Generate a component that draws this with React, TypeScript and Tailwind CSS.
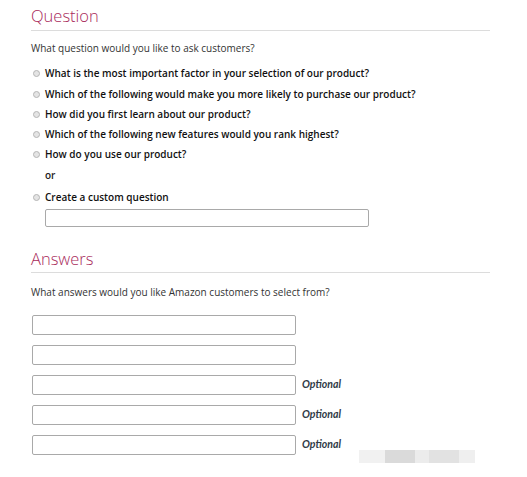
export default function App() {
  const options = [
    'What is the most important factor in your selection of our product?',
    'Which of the following would make you more likely to purchase our product?',
    'How did you first learn about our product?',
    'Which of the following new features would you rank highest?',
    'How do you use our product?',
  ];

  return (
    <div className="min-h-screen w-[527px] bg-white pl-[31px] pr-[37px] pt-[6px] font-['Open_Sans',sans-serif] text-[#222]">
      {/* Question */}
      <h2 className="border-b border-[#dcdcdc] pb-[4px] text-[16.5px] font-light leading-[20px] text-[#a8295a]">
        Question
      </h2>
      <p className="mt-[10px] text-[10px] leading-[14px] text-[#333]">
        What question would you like to ask customers?
      </p>

      <div className="mt-[8px] flex flex-col">
        {options.map((o, i) => (
          <label key={o} className={`flex h-[20px] items-center ${i === 1 ? 'mt-[1px]' : ''}`}>
            <span className="ml-[2px] mr-[5px] h-[7px] w-[7px] rounded-full border border-[#b5b5b5] bg-[#e4e4e4]" />
            <span className="text-[10px] font-semibold text-[#111]">{o}</span>
          </label>
        ))}
      </div>
      <div className="mt-[1px] flex h-[20px] items-center pl-[14px] text-[10px] font-semibold text-[#222]">
        or
      </div>
      <label className="mt-[2px] flex h-[20px] items-center">
        <span className="ml-[2px] mr-[5px] h-[7px] w-[7px] rounded-full border border-[#b5b5b5] bg-[#e4e4e4]" />
        <span className="text-[10px] font-semibold text-[#111]">Create a custom question</span>
      </label>
      <div className="ml-[14px] mt-[2px] h-[18px] w-[324px] rounded-[2px] border border-[#a9a9a9] bg-white" />

      {/* Answers */}
      <h2 className="mt-[22px] border-b border-[#dcdcdc] pb-[3px] text-[16.5px] font-light leading-[20px] text-[#a8295a]">
        Answers
      </h2>
      <p className="mt-[12px] text-[10px] leading-[14px] text-[#333]">
        What answers would you like Amazon customers to select from?
      </p>

      <div className="mt-[16px] flex flex-col gap-[10px] pl-[1px]">
        {[false, false, true, true, true].map((opt, i) => (
          <div key={i} className="flex h-[20px] items-center">
            <div className="h-[20px] w-[264px] rounded-[2px] border border-[#a9a9a9] bg-white" />
            {opt && (
              <span className="ml-[6px] font-['Lato',sans-serif] text-[10.5px] font-bold italic text-[#2f3a45]">
                Optional
              </span>
            )}
            {i === 4 && (
              <div className="ml-[18px] mt-[22px] flex h-[13px] w-[116px]">
                <div className="h-full w-[26px] bg-[#f1f1f1]" />
                <div className="h-full w-[30px] bg-[#dadada]" />
                <div className="h-full w-[14px] bg-[#ececec]" />
                <div className="h-full w-[30px] bg-[#e2e2e2]" />
                <div className="h-full w-[16px] bg-[#efefef]" />
              </div>
            )}
          </div>
        ))}
      </div>
    </div>
  );
}
